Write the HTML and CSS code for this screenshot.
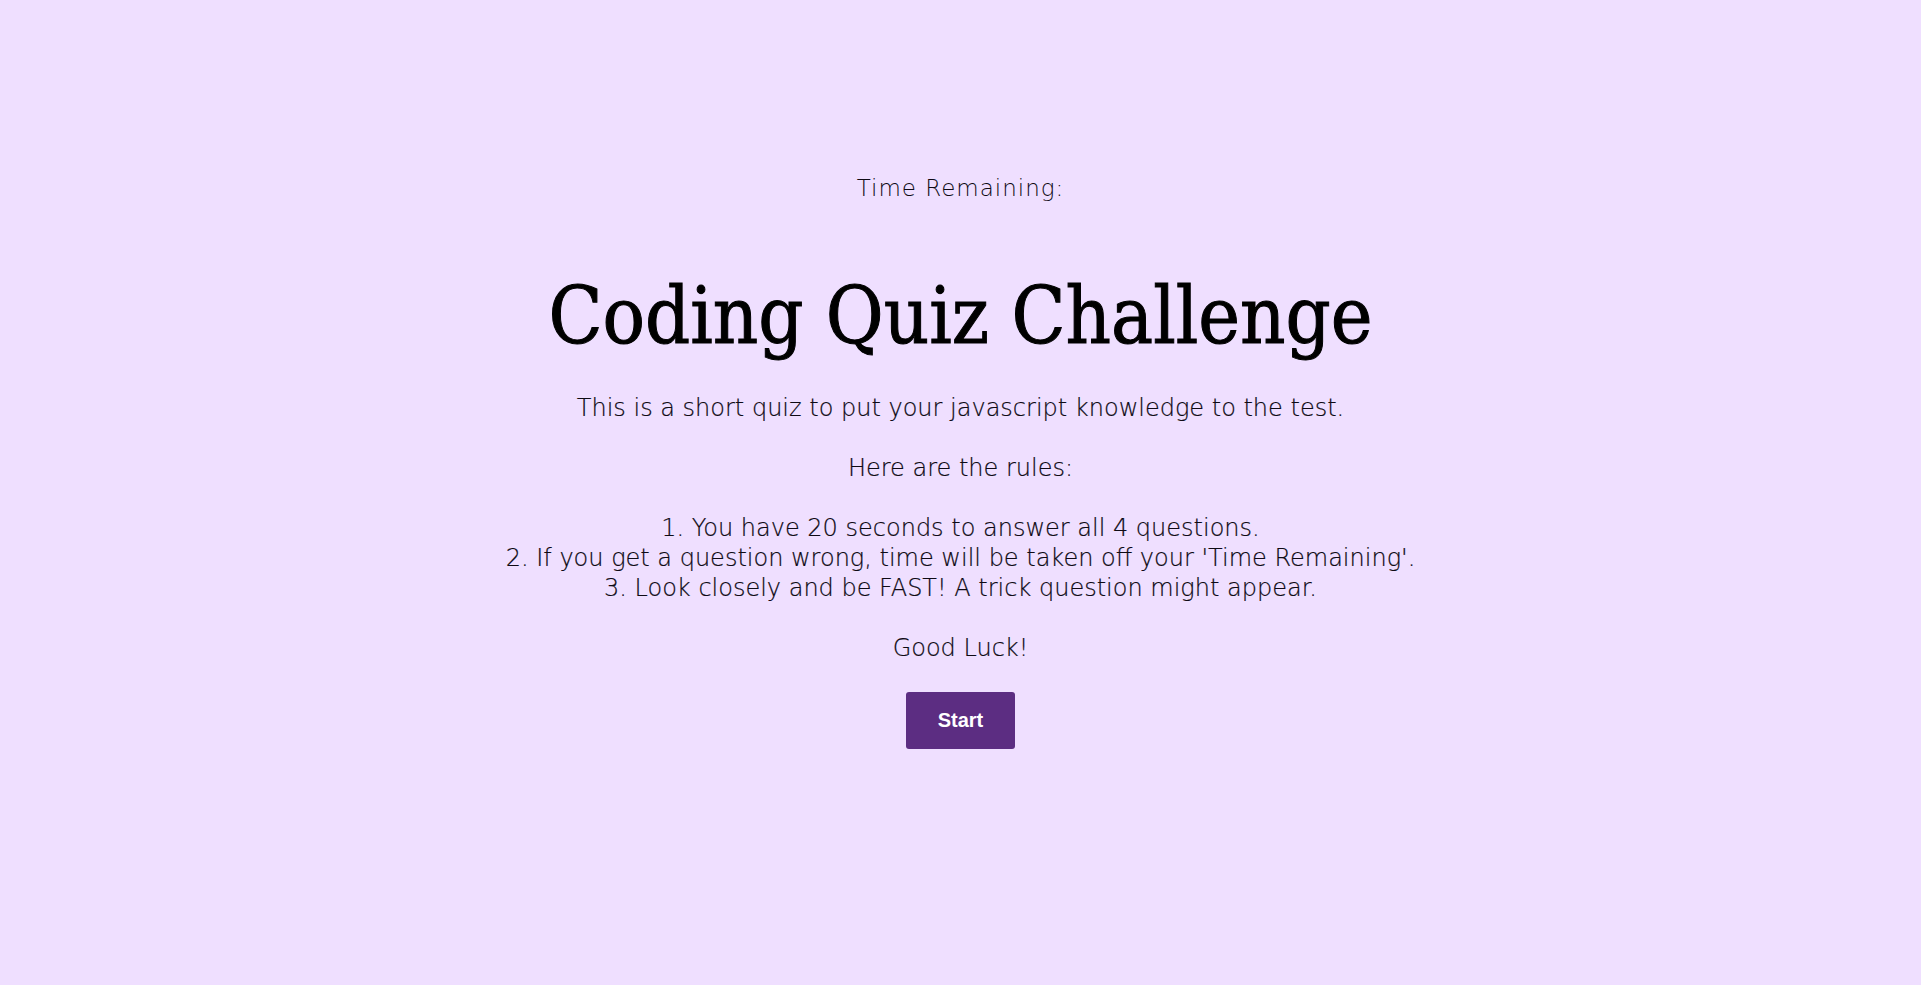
FILE: index.html
```html
<!DOCTYPE html>
<html lang="en">
<head>
<meta charset="utf-8">
<title>Coding Quiz Challenge</title>
<link rel="stylesheet" href="styles.css">
</head>
<body>
<header class="timer">Time Remaining:</header>
<main class="intro">
  <h1 class="title">Coding Quiz Challenge</h1>
  <p class="text">This is a short quiz to put your javascript knowledge to the test.</p>
  <p class="text">Here are the rules:</p>
  <p class="text rules">1. You have 20 seconds to answer all 4 questions.<br>2. If you get a question wrong, time will be taken off your 'Time Remaining'.<br>3. Look closely and be FAST! A trick question might appear.</p>
  <p class="text">Good Luck!</p>
  <button class="start" type="button">Start</button>
</main>
</body>
</html>
```
FILE: styles.css
```css
html, body {
  margin: 0;
  padding: 0;
}
body {
  background: #efdfff;
  color: #0e0a14;
  font-family: "DejaVu Sans", Inter, sans-serif;
  font-weight: 200;
  text-align: center;
}
.timer {
  padding-top: 173px;
  font-size: 23px;
  letter-spacing: 1px;
  line-height: 30px;
}
.intro {
  display: flex;
  flex-direction: column;
  align-items: center;
}
.title {
  margin: 68px 0 0;
  font-family: "DejaVu Serif", serif;
  font-stretch: condensed;
  font-weight: normal;
  font-size: 78.5px;
  line-height: 90px;
  color: #000;
  -webkit-text-stroke: 1px #000;
}
.text {
  margin: 30px 0 0;
  font-size: 24px;
  line-height: 30px;
  -webkit-text-stroke: 0.2px currentColor;
}
.intro .title + .text {
  margin-top: 32px;
}
.start {
  margin-top: 29px;
  width: 109px;
  height: 57px;
  border: none;
  border-radius: 3px;
  background: #5c2d82;
  color: #fff;
  font-family: "Liberation Sans", Arial, sans-serif;
  font-weight: bold;
  font-size: 20px;
}
```
